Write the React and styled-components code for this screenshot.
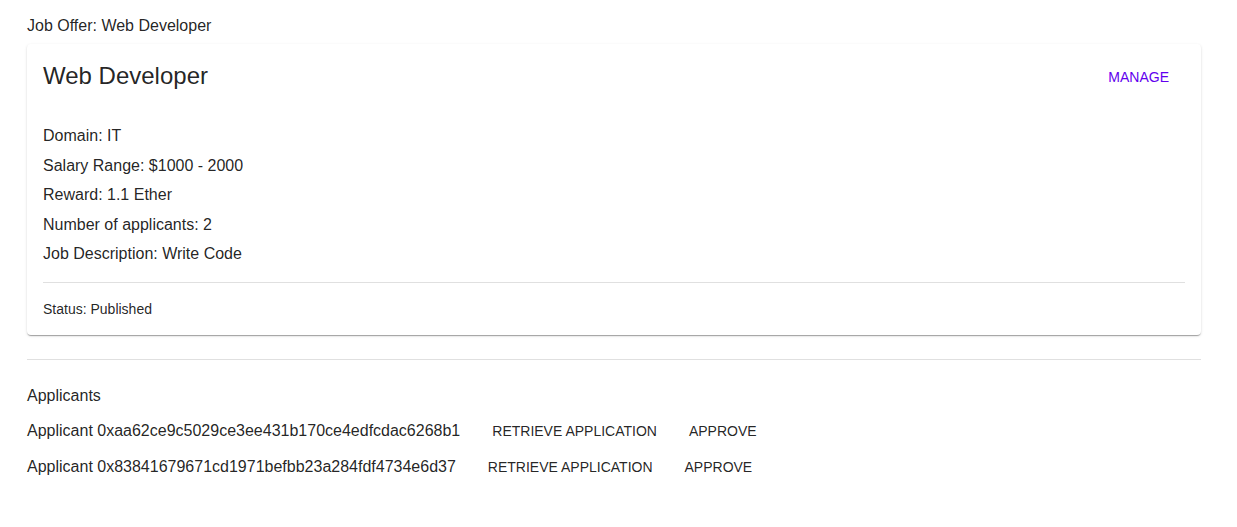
import React from "react";
import styled, { createGlobalStyle } from "styled-components";

const Global = createGlobalStyle`
  html, body { margin: 0; padding: 0; background: #fff; }
  body {
    font-family: "Liberation Sans", Arial, sans-serif;
    color: rgba(0,0,0,0.87);
  }
`;

const Page = styled.div`
  padding: 14px 36px 24px 27px;
`;

const Heading = styled.div`
  font-size: 16px;
  line-height: 24px;
  margin-bottom: 6px;
`;

const Card = styled.div`
  background: #fff;
  border-radius: 4px;
  box-shadow: 0px 2px 1px -1px rgba(0,0,0,0.2), 0px 1px 1px 0px rgba(0,0,0,0.14), 0px 1px 3px 0px rgba(0,0,0,0.12);
  padding: 16px;
`;

const CardHeader = styled.div`
  display: flex;
  align-items: center;
  justify-content: space-between;
  height: 32px;
  margin-bottom: 29px;
`;

const Title = styled.h2`
  margin: 0;
  font-size: 24px;
  font-weight: 400;
  line-height: 32px;
`;

const TextButton = styled.button`
  background: none;
  border: none;
  font-family: inherit;
  font-size: 14px;
  text-transform: uppercase;
  letter-spacing: 0;
  color: ${(p) => p.$color || "rgba(0,0,0,0.87)"};
  padding: 0 16px;
  height: 36px;
  margin-left: ${(p) => p.$ml || "0"};
  margin-top: ${(p) => p.$mt || "0"};
  cursor: pointer;
`;

const InfoLine = styled.p`
  margin: 0;
  font-size: 16px;
  line-height: 29.5px;
`;

const Divider = styled.hr`
  border: none;
  height: 1px;
  background: rgba(0,0,0,0.12);
  margin: ${(p) => p.$m || "0"};
`;

const Status = styled.div`
  font-size: 14px;
  line-height: 20px;
`;

const SectionTitle = styled.div`
  font-size: 16px;
  line-height: 24px;
  margin-bottom: 5px;
`;

const Row = styled.div`
  display: flex;
  align-items: center;
  height: 36px;
`;

const RowText = styled.span`
  font-size: 16px;
`;

const info = [
  "Domain: IT",
  "Salary Range: $1000 - 2000",
  "Reward: 1.1 Ether",
  "Number of applicants: 2",
  "Job Description: Write Code",
];

const applicants = [
  "0xaa62ce9c5029ce3ee431b170ce4edfcdac6268b1",
  "0x83841679671cd1971befbb23a284fdf4734e6d37",
];

export default function App() {
  return (
    <>
      <Global />
      <Page>
        <Heading>Job Offer: Web Developer</Heading>
        <Card>
          <CardHeader>
            <Title>Web Developer</Title>
            <TextButton $color="#6200ee" $mt="2px">Manage</TextButton>
          </CardHeader>
          {info.map((t) => (
            <InfoLine key={t}>{t}</InfoLine>
          ))}
          <Divider $m="13px 0 16px" />
          <Status>Status: Published</Status>
        </Card>
        <Divider $m="24px 0 24px" />
        <SectionTitle>Applicants</SectionTitle>
        {applicants.map((a) => (
          <Row key={a}>
            <RowText>Applicant {a}</RowText>
            <TextButton $ml="16px">Retrieve Application</TextButton>
            <TextButton>Approve</TextButton>
          </Row>
        ))}
      </Page>
    </>
  );
}
